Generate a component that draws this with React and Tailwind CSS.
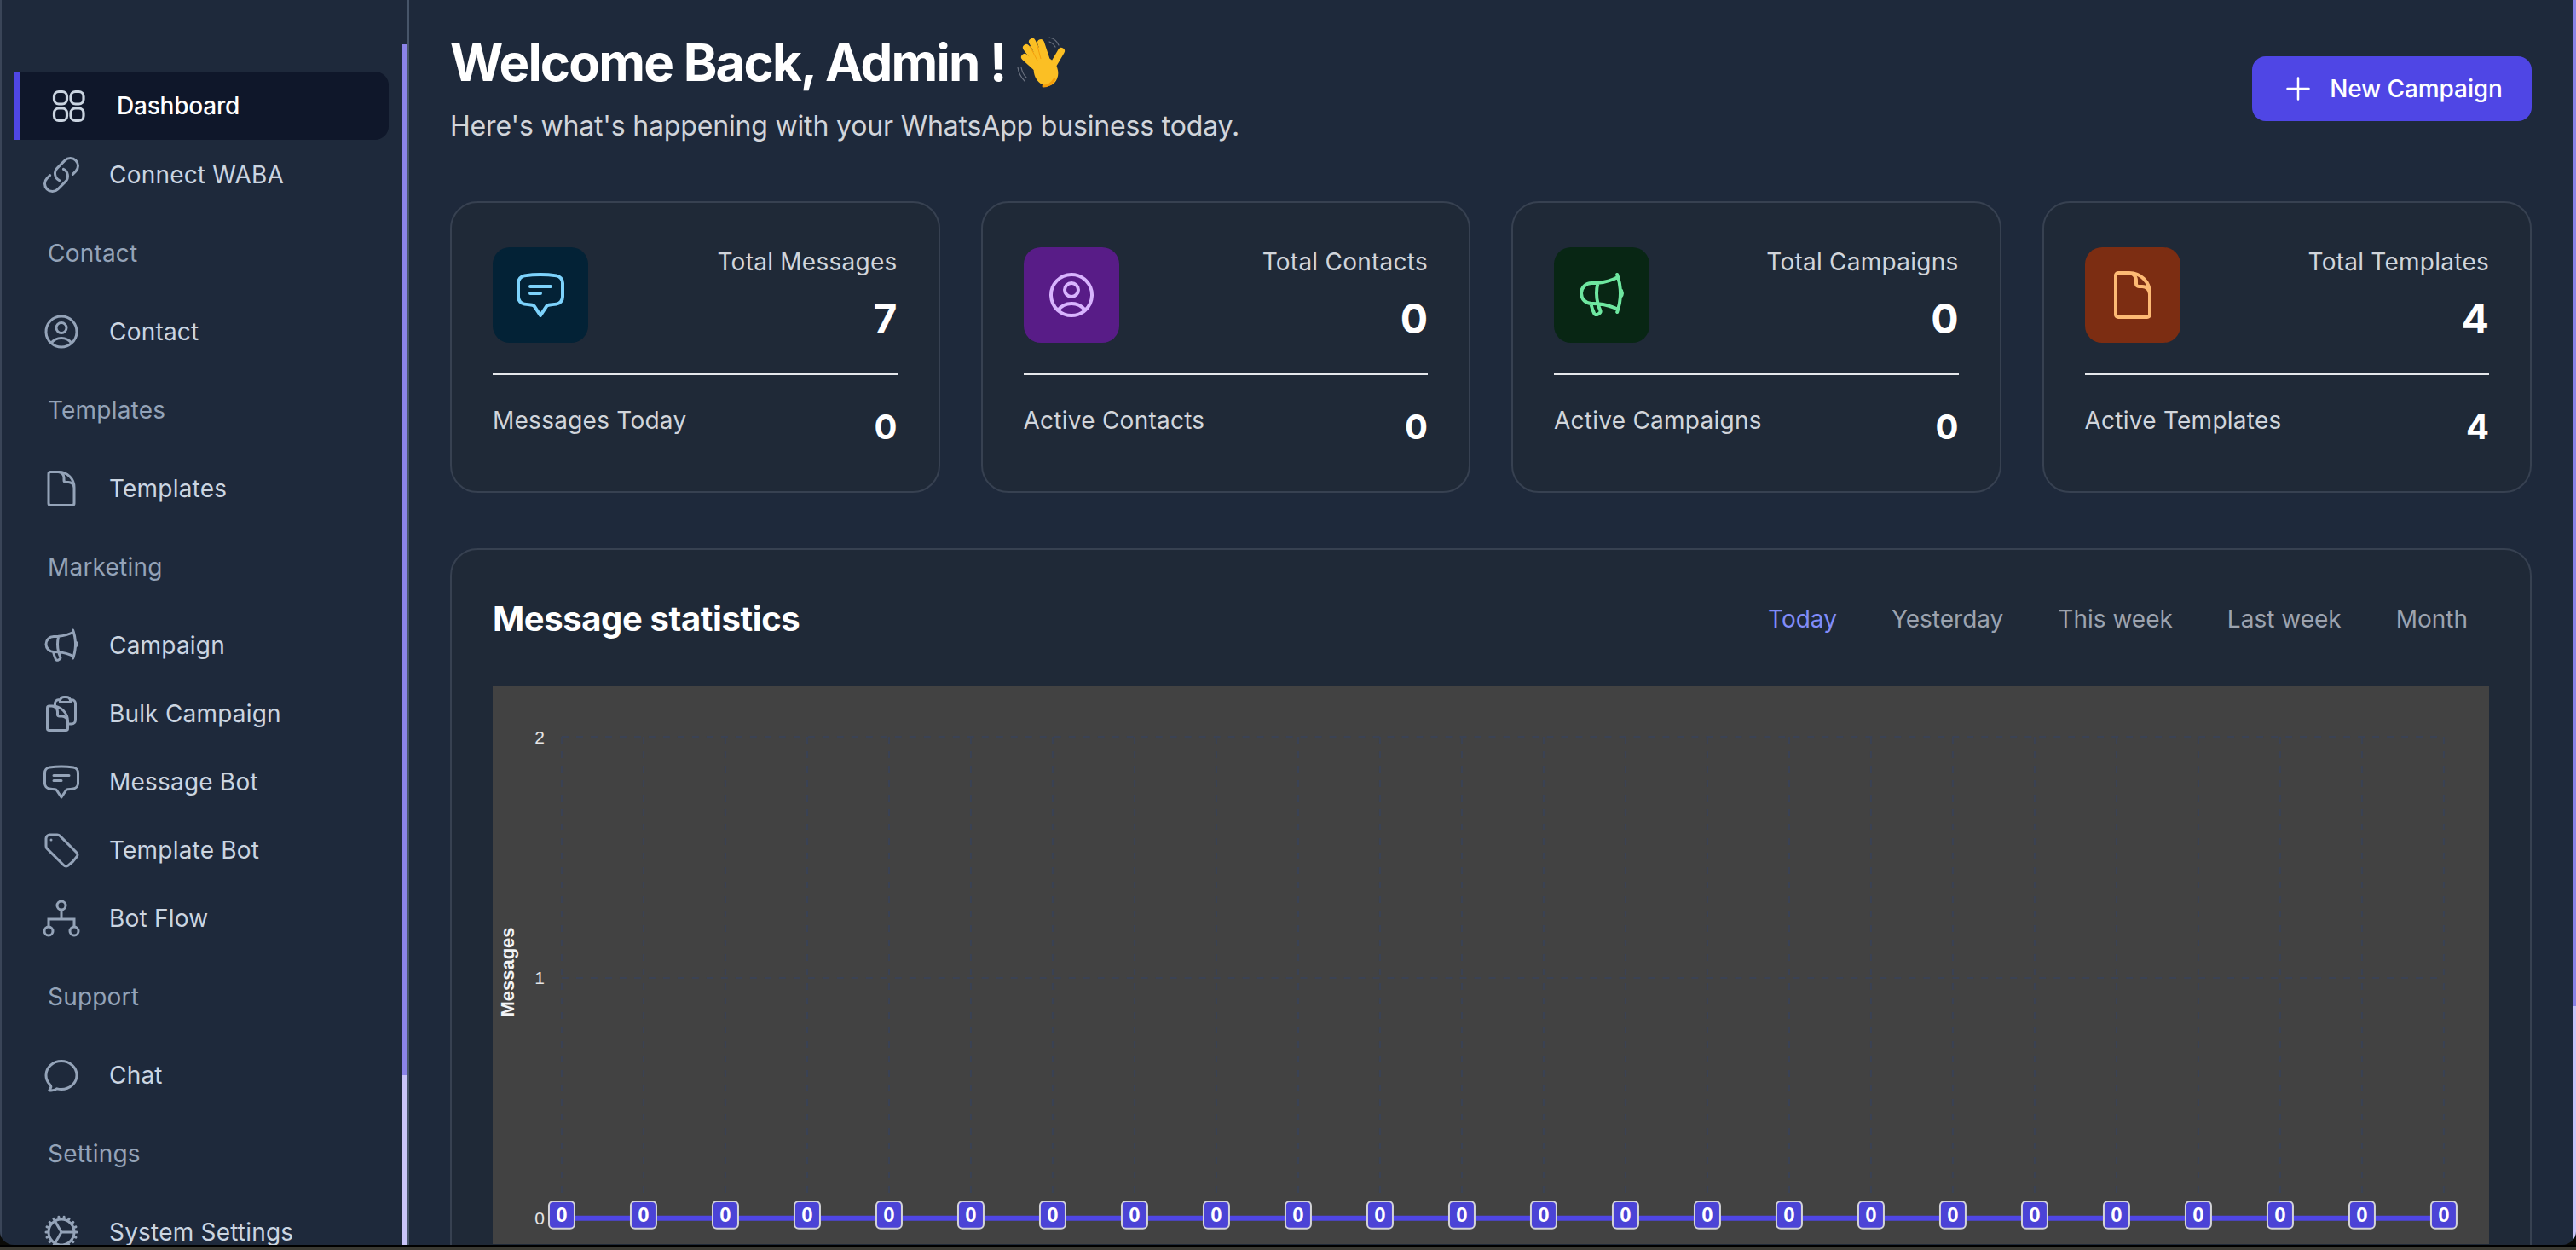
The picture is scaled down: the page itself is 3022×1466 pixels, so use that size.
import {
  HiOutlineLink,
  HiOutlineUserCircle,
  HiOutlineDocument,
  HiOutlineMegaphone,
  HiOutlineClipboardDocument,
  HiOutlineChatBubbleBottomCenterText,
  HiOutlineTag,
  HiOutlineChatBubbleOvalLeft,
  HiOutlineCog,
  HiOutlinePlus,
} from "react-icons/hi2";

const DashboardIcon = ({ className }) => (
  <svg viewBox="0 0 48 48" fill="none" stroke="currentColor" strokeWidth="3.2" className={className}>
    <rect x="7.5" y="7.5" width="15" height="14.5" rx="5.5" />
    <rect x="27" y="7.5" width="15" height="14.5" rx="5.5" />
    <rect x="7.5" y="27" width="15" height="14.5" rx="5.5" />
    <rect x="27" y="27" width="15" height="14.5" rx="5.5" />
  </svg>
);

const FlowIcon = ({ className }) => (
  <svg viewBox="0 0 48 48" fill="none" stroke="currentColor" strokeWidth="3" className={className}>
    <circle cx="24" cy="9" r="5" />
    <circle cx="9" cy="39" r="5" />
    <circle cx="39" cy="39" r="5" />
    <path d="M24 14v11M9 34v-9h30v9" />
  </svg>
);

const WaveHand = () => (
  <svg viewBox="0 0 58 60" className="w-[58px] h-[60px] shrink-0">
    <g fill="none" stroke="#6b7280" strokeWidth="1.2" strokeLinecap="round">
      <path d="M1 36c1 7 4 12 8 16" />
      <path d="M5 36c1 5 3 9 6 12" />
      <path d="M38 1c5 1 9 4 11 9" />
      <path d="M38 6c3 1 5 3 7 6" />
    </g>
    <g fill="none" stroke="#fbbf24" strokeWidth="8" strokeLinecap="round">
      <path d="M33 36L18 6" />
      <path d="M30 38L11 13" />
      <path d="M29 42L9 24" />
      <path d="M37 34L28 7" />
      <path d="M42 34L52 17" />
    </g>
    <ellipse cx="34" cy="41" rx="14" ry="17" fill="#fbbf24" transform="rotate(-18 34 41)" />
    <path d="M24 28L15 11M28 26L23 7" stroke="#f59e0b" strokeWidth="1" fill="none" />
    <path d="M44 50c-3 5-8 8-13 8" stroke="#f59e0b" strokeWidth="3" fill="none" strokeLinecap="round" />
  </svg>
);

const NAV = [
  { label: "Dashboard", icon: DashboardIcon, active: true },
  { label: "Connect WABA", icon: HiOutlineLink },
  { heading: "Contact" },
  { label: "Contact", icon: HiOutlineUserCircle },
  { heading: "Templates" },
  { label: "Templates", icon: HiOutlineDocument },
  { heading: "Marketing" },
  { label: "Campaign", icon: HiOutlineMegaphone },
  { label: "Bulk Campaign", icon: HiOutlineClipboardDocument },
  { label: "Message Bot", icon: HiOutlineChatBubbleBottomCenterText },
  { label: "Template Bot", icon: HiOutlineTag },
  { label: "Bot Flow", icon: FlowIcon },
  { heading: "Support" },
  { label: "Chat", icon: HiOutlineChatBubbleOvalLeft },
  { heading: "Settings" },
  { label: "System Settings", icon: HiOutlineCog },
];

const CARDS = [
  { title: "Total Messages", total: 7, sub: "Messages Today", subValue: 0, icon: HiOutlineChatBubbleBottomCenterText, box: "bg-[#032236] text-[#7dd3fc]" },
  { title: "Total Contacts", total: 0, sub: "Active Contacts", subValue: 0, icon: HiOutlineUserCircle, box: "bg-[#581c87] text-[#d8b4fe]" },
  { title: "Total Campaigns", total: 0, sub: "Active Campaigns", subValue: 0, icon: HiOutlineMegaphone, box: "bg-[#082614] text-[#6ee7a0]" },
  { title: "Total Templates", total: 4, sub: "Active Templates", subValue: 4, icon: HiOutlineDocument, box: "bg-[#7c2d12] text-[#fdba74]" },
];

const TABS = ["Today", "Yesterday", "This week", "Last week", "Month"];

const POINTS = Array.from({ length: 24 }, (_, i) => 81 + i * 96.04);

const Sidebar = () => (
  <aside className="w-[480px] shrink-0 flex border-r-2 border-[#475569] border-l-2 border-l-[#3a4558]">
    <nav className="flex-1 pt-[84px] min-w-0">
      {NAV.map((item, i) => {
        if (item.heading) {
          return (
            <div key={i} className="h-[104px] flex items-center pl-[54px] text-[28px] tracking-[0.2px] text-[#94a3b8]">
              {item.heading}
            </div>
          );
        }
        const Icon = item.icon;
        if (item.active) {
          return (
            <div key={i} className="h-[80px] w-[440px] ml-[14px] mb-[1px] flex items-center gap-[33px] pl-[32px] border-l-8 border-[#4f46e5] bg-[#0f172a] rounded-r-[16px]">
              <Icon className="w-[48px] h-[48px] text-[#cbd5e1]" />
              <span className="text-[28px] font-medium tracking-[-0.2px] text-white">{item.label}</span>
            </div>
          );
        }
        return (
          <div key={i} className="h-[80px] flex items-center gap-[32px] pl-[46px]">
            <Icon className="w-[48px] h-[48px] text-[#94a3b8]" />
            <span className="text-[28px] tracking-[0.2px] text-[#cbd5e1]">{item.label}</span>
          </div>
        );
      })}
    </nav>
    <div className="w-[6px] shrink-0 pt-[52px] flex flex-col">
      <div className="h-[1209px] bg-[#8b83e8]" />
      <div className="flex-1 bg-[#c9c4f8]" />
    </div>
  </aside>
);

const StatCard = ({ card }) => {
  const Icon = card.icon;
  return (
    <div className="h-[342px] rounded-[32px] border-2 border-[#374151] bg-[#1f2937] px-12 pt-[52px]">
      <div className="flex justify-between h-[112px]">
        <div className={`w-[112px] h-[112px] rounded-[20px] flex items-center justify-center ${card.box}`}>
          <Icon className="w-[64px] h-[64px]" />
        </div>
        <div className="text-right">
          <div className="text-[28px] leading-[34px] tracking-[0.25px] text-[#d1d5db]">{card.title}</div>
          <div className="mt-[22px] text-[48px] leading-[56px] font-bold text-white">{card.total}</div>
        </div>
      </div>
      <div className="mt-9 border-t-2 border-[#e5e7eb] pt-[33px] flex justify-between items-start">
        <span className="text-[28px] leading-[40px] tracking-[0.25px] text-[#d1d5db]">{card.sub}</span>
        <span className="text-[40px] leading-[56px] font-bold text-white">{card.subValue}</span>
      </div>
    </div>
  );
};

const Chart = () => (
  <div className="h-[655px] bg-[#424242]">
    <svg viewBox="0 0 2343 655" className="w-full h-full font-['Liberation_Sans',sans-serif]">
      <g stroke="#3a4254" strokeWidth="2" strokeDasharray="8 9" fill="none">
        <path d="M81 60H2290M81 343H2290" />
        {POINTS.map((x) => (
          <path key={x} d={`M${x} 60V604`} />
        ))}
      </g>
      <text x="55" y="60" fill="#e5e5e5" fontSize="21" textAnchor="middle" dominantBaseline="central">2</text>
      <text x="55" y="343" fill="#e5e5e5" fontSize="21" textAnchor="middle" dominantBaseline="central">1</text>
      <text x="55" y="625" fill="#e5e5e5" fontSize="21" textAnchor="middle" dominantBaseline="central">0</text>
      <text
        transform="translate(18 336) rotate(-90)"
        fill="#f3f4f6"
        fontSize="22"
        fontWeight="700"
        textAnchor="middle"
        dominantBaseline="central"
      >
        Messages
      </text>
      <path d={`M${POINTS[0]} 625H${POINTS[23]}`} stroke="#4f46e5" strokeWidth="6" />
      {POINTS.map((x) => (
        <g key={x}>
          <rect x={x - 15} y="605" width="30" height="32" rx="5" fill="#4b43d6" stroke="#d4d4d8" strokeWidth="2" />
          <text x={x} y="621" fill="#fff" fontSize="24" fontWeight="700" textAnchor="middle" dominantBaseline="central">0</text>
        </g>
      ))}
    </svg>
  </div>
);

export default function App() {
  return (
    <div className="w-[3022px] h-[1466px] overflow-hidden bg-[#0b0b08] font-['Inter',sans-serif]">
      <div className="h-[1460px] flex overflow-hidden rounded-b-[16px] bg-[#1e293b]">
        <Sidebar />
        <main className="flex-1 min-w-0 px-12">
          <header className="flex justify-between items-start pt-[37px]">
            <div>
              <div className="flex items-center gap-[14px] h-[72px]">
                <h1 className="text-[60px] leading-[72px] font-bold text-white tracking-[-0.03em]">Welcome Back, Admin !</h1>
                <WaveHand />
              </div>
              <p className="mt-[15px] text-[32px] leading-[48px] tracking-[-0.17px] text-[#d1d5db]">Here's what's happening with your WhatsApp business today.</p>
            </div>
            <button className="mt-[29px] w-[328px] h-[76px] rounded-[16px] bg-[#4f46e5] flex items-center justify-center gap-[17px] text-[28px] font-medium tracking-[-0.1px] text-white">
              <HiOutlinePlus className="w-[40px] h-[40px]" />
              New Campaign
            </button>
          </header>

          <section className="mt-[64px] grid grid-cols-4 gap-12">
            {CARDS.map((card) => (
              <StatCard key={card.title} card={card} />
            ))}
          </section>

          <section className="mt-[65px] h-[900px] rounded-[32px] border-2 border-[#374151] bg-[#1f2937] px-12">
            <div className="h-[159px] pt-[2px] flex items-center justify-between">
              <h2 className="text-[40px] font-bold tracking-[-0.4px] text-white">Message statistics</h2>
              <div className="flex gap-[64px] pr-[25px] text-[28px] text-[#9ca3af]">
                {TABS.map((tab, i) => (
                  <span key={tab} className={i === 0 ? "text-[#818cf8]" : ""}>{tab}</span>
                ))}
              </div>
            </div>
            <Chart />
          </section>
        </main>
        <div className="w-[4px] shrink-0 flex flex-col">
          <div className="h-[1180px] bg-[#8b83e8]" />
          <div className="flex-1 bg-[#c9c4f8]" />
        </div>
      </div>
      <div className="h-[2px] bg-black" />
      <div className="h-[4px] bg-[#3b3a33]" />
    </div>
  );
}
